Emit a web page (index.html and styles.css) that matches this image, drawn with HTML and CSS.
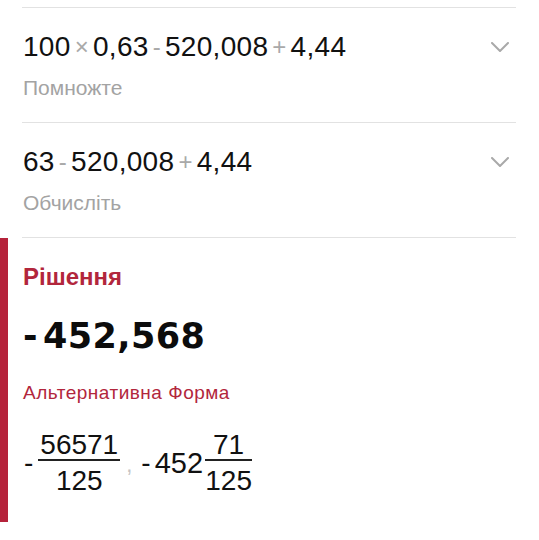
FILE: index.html
```html
<!DOCTYPE html>
<html lang="uk">
<head>
<meta charset="utf-8">
<link rel="stylesheet" href="styles.css">
</head>
<body>
<div class="steps">
  <div class="step">
    <div class="step-text">
      <div class="expr">100<span class="op op-x">×</span>0,63<span class="op">-</span>520,008<span class="op">+</span>4,44</div>
      <div class="hint">Помножте</div>
    </div>
    <svg class="chev" width="18" height="10" viewBox="0 0 18 10"><polyline points="1,1 9,9 17,1" fill="none" stroke="#a9a9a9" stroke-width="2" stroke-linecap="round" stroke-linejoin="round"/></svg>
  </div>
  <div class="step">
    <div class="step-text">
      <div class="expr">63<span class="op">-</span>520,008<span class="op">+</span>4,44</div>
      <div class="hint">Обчисліть</div>
    </div>
    <svg class="chev" width="18" height="10" viewBox="0 0 18 10"><polyline points="1,1 9,9 17,1" fill="none" stroke="#a9a9a9" stroke-width="2" stroke-linecap="round" stroke-linejoin="round"/></svg>
  </div>
</div>
<div class="solution">
  <div class="bar"></div>
  <div class="sol-body">
    <div class="sol-title">Рішення</div>
    <div class="sol-value"><span class="neg">-</span>452,568</div>
    <div class="alt-title">Альтернативна Форма</div>
    <div class="alt">
      <span class="minus">-</span>
      <span class="frac"><span class="num">56571</span><span class="den">125</span></span>
      <span class="comma">,</span>
      <span class="minus minus2">-</span><span class="whole">452</span>
      <span class="frac frac2"><span class="num">71</span><span class="den">125</span></span>
    </div>
  </div>
</div>
</body>
</html>
```
FILE: styles.css
```css
html, body {
  margin: 0;
  padding: 0;
  background: #ffffff;
}
body {
  font-family: "Liberation Sans", Arial, sans-serif;
  color: #111111;
  width: 539px;
}
.steps {
  padding-top: 7px;
  margin: 0 23px 0 22px;
}
.step {
  display: flex;
  justify-content: space-between;
  align-items: flex-start;
  border-top: 1px solid #e2e2e2;
  padding: 22px 0 22px 1px;
}
.step:last-child {
  border-bottom: 1px solid #e2e2e2;
}
.expr {
  font-size: 28px;
  line-height: 34px;
  white-space: nowrap;
  letter-spacing: 0.3px;
}
.op {
  color: #a9a9a9;
  font-size: 24px;
  line-height: 1;
  margin: 0 4px;
  position: relative;
  top: -1px;
}
.op-x {
  font-size: 24px;
}
.hint {
  margin-top: 12px;
  font-size: 21px;
  line-height: 24px;
  color: #a3a3a3;
}
.chev {
  margin-top: 12px;
  margin-right: 7px;
  display: block;
}
.solution {
  display: flex;
}
.bar {
  width: 8px;
  background: #b5233b;
}
.sol-body {
  padding: 25px 0 27px 15px;
}
.sol-title {
  font-size: 24px;
  line-height: 28px;
  font-weight: bold;
  color: #b2263c;
}
.sol-value {
  margin-top: 24px;
  font-family: "DejaVu Sans", "Liberation Sans", sans-serif;
  font-size: 35px;
  line-height: 42px;
  font-weight: bold;
  letter-spacing: 0.4px;
  color: #0c0c0c;
}
.neg {
  margin-right: 5px;
}
.alt-title {
  margin-top: 25px;
  font-size: 19px;
  line-height: 22px;
  letter-spacing: 0.5px;
  color: #b2263c;
}
.alt {
  margin-top: 27px;
  display: flex;
  align-items: center;
  font-size: 28px;
  color: #111111;
}
.minus {
  font-size: 28px;
  line-height: 1;
  margin: 0 5px 0 1px;
}
.frac {
  display: inline-flex;
  flex-direction: column;
  align-items: center;
}
.num {
  line-height: 28px;
  border-bottom: 2px solid #222;
  padding: 0 2px;
  align-self: stretch;
  text-align: center;
}
.den {
  line-height: 28px;
  padding-top: 6px;
}
.comma {
  color: #c4c4c4;
  font-size: 22px;
  line-height: 1;
  margin: 4px 9px 0 6px;
}
.minus2 {
  margin: 0 4px 0 0;
}
.whole {
  line-height: 1;
  font-size: 29px;
  margin-right: 2px;
}
.frac2 .num {
  padding: 0 8px;
}
```
